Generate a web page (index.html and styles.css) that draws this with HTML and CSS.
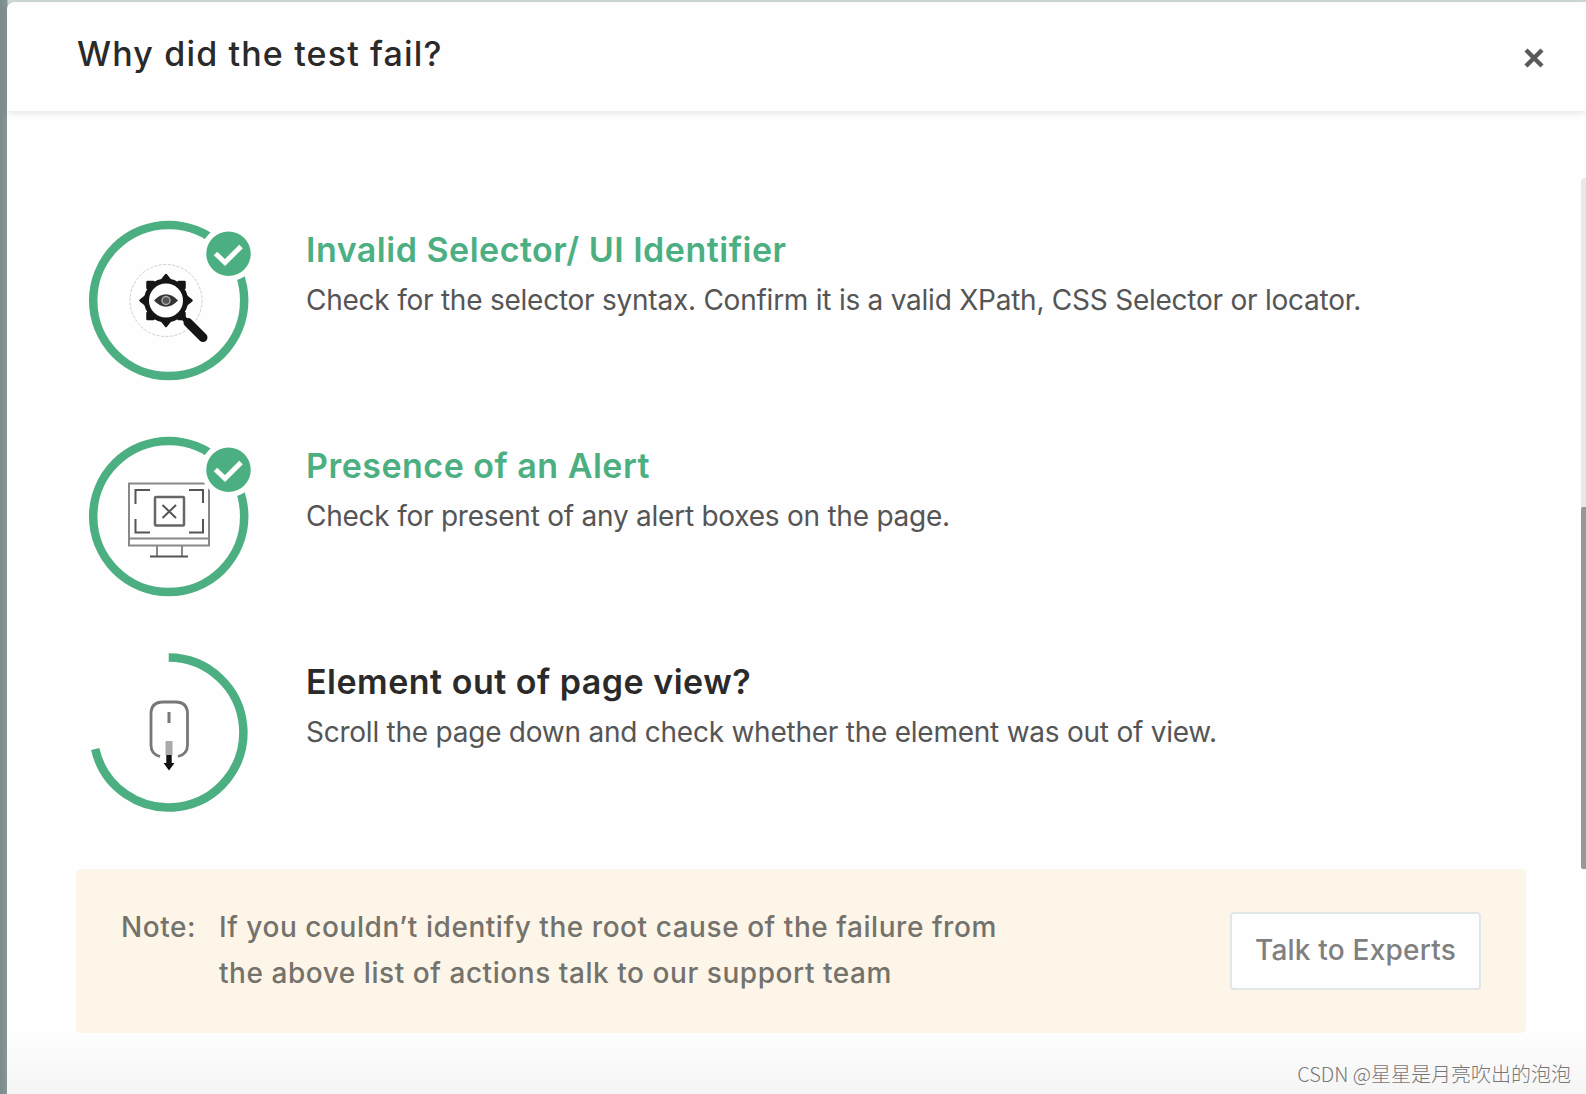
FILE: index.html
```html
<!DOCTYPE html>
<html lang="en">
<head>
  <meta charset="UTF-8">
  <meta name="viewport" content="width=device-width, initial-scale=1.0">
  <title>Why did the test fail?</title>
  <link rel="stylesheet" href="styles.css">
</head>
<body>

  <div class="modal">
    <div class="modal-header">
      <h2>Why did the test fail?</h2>
      <button class="close" aria-label="Close">
        <svg width="20" height="20" viewBox="0 0 20 20"><path d="M2 2L18 18M18 2L2 18"/></svg>
      </button>
    </div>

    <div class="modal-body">
      <ul class="checks">
        <li class="check done">
          <svg class="check-icon" viewBox="0 0 180 180">
            <circle class="ring" cx="88.7" cy="90.5" r="75.5"/>
            <circle class="orbit" cx="86" cy="90.5" r="36"/>
            <g class="gear">
              <circle cx="86" cy="90.5" r="19.5"/>
              <path class="teeth" d="M86 65l4 5h-8zM86 116l4-5h-8zM60.5 90.5l5-4v8zM111.5 90.5l-5-4v8zM67.500 72h6l-6 6zM104.500 72h-6l6 6zM67.500 109h6l-6-6zM104.500 109h-6l6-6z"/>
              <path class="neck" d="M102 106.500L107 111.500"/>
              <path class="handle" d="M108 112.500L123 127.500"/>
            </g>
            <path class="eye" d="M74 90.5Q86 78 98 90.5Q86 103 74 90.5Z"/>
            <circle class="iris" cx="86" cy="90.5" r="4"/>
            <circle class="badge" cx="148.5" cy="43.7" r="25"/>
            <path class="tick" d="M135.500 43.500L145 52.500L161 36.500"/>
          </svg>
          <div class="check-text">
            <h3>Invalid Selector/ UI Identifier</h3>
            <p>Check for the selector syntax. Confirm it is a valid XPath, CSS Selector or locator.</p>
          </div>
        </li>

        <li class="check done">
          <svg class="check-icon" viewBox="0 0 180 180">
            <circle class="ring" cx="88.7" cy="90.5" r="75.5"/>
            <g class="monitor">
              <rect x="49" y="57.5" width="80" height="62"/>
              <path d="M49 112.500H129"/>
              <path d="M77 120V130M102 120V130"/>
              <path class="dark" d="M70 130.500H108"/>
              <path class="dark" d="M70 64H55.500V78M109 64H123V77M55.500 93V106.500H70M123 93V106.500H109"/>
              <rect class="box" x="75" y="71" width="29" height="28.5" rx="1"/>
              <path class="dark" d="M82.500 79L96 92M96 79L82.500 92"/>
            </g>
            <circle class="badge" cx="148.5" cy="43.7" r="25"/>
            <path class="tick" d="M135.500 43.500L145 52.500L161 36.500"/>
          </svg>
          <div class="check-text">
            <h3>Presence of an Alert</h3>
            <p>Check for present of any alert boxes on the page.</p>
          </div>
        </li>

        <li class="check">
          <svg class="check-icon" viewBox="0 0 180 180">
            <path class="ring" d="M88.700 15.500A75 75 0 1 1 15.200 107"/>
            <path class="mouse" d="M80 114.500C74 113 71 109 71 103V72Q71 60 83 60H95.500Q107.500 60 107.500 72V103C107.500 109 104 113 98 114.500"/>
            <path class="wheel" d="M89 70V81"/>
            <path class="trail" d="M89 99V113"/>
            <path class="arrow" d="M86.300 113H91.700V121H94.500L89 128.500L83.500 121H86.300Z"/>
          </svg>
          <div class="check-text">
            <h3>Element out of page view?</h3>
            <p>Scroll the page down and check whether the element was out of view.</p>
          </div>
        </li>
      </ul>

      <div class="note">
        <span class="note-label">Note:</span>
        <p>If you couldn’t identify the root cause of the failure from<br>the above list of actions talk to our support team</p>
        <button class="btn">Talk to Experts</button>
      </div>
    </div>

    <div class="scrollbar"><div class="thumb"></div></div>
    <div class="watermark">CSDN @星星是月亮吹出的泡泡</div>
  </div>

</body>
</html>
```
FILE: styles.css
```css
* {
  box-sizing: border-box;
}

body {
  margin: 0;
  padding: 2px 0 0 7px;
  height: 100vh;
  overflow: hidden;
  font-family: Inter, "Liberation Sans", sans-serif;
  background: linear-gradient(90deg, #7b8b8c 0, #879697 7px, #cfd8d8 8px);
}

h2, h3, p, ul {
  margin: 0;
  padding: 0;
}

.modal {
  position: relative;
  height: 1092px;
  background: linear-gradient(#fefefe 1030px, #f5f5f5);
  border-top-left-radius: 8px;
}

.modal-header {
  display: flex;
  justify-content: space-between;
  height: 109px;
  padding: 30px 42px 0 70px;
  background: #fefefe;
  border-top-left-radius: 8px;
  box-shadow: 0 2px 7px rgba(0,0,0,0.1);
}

.modal-header h2 {
  font-size: 34px;
  font-weight: 500;
  line-height: 44px;
  letter-spacing: 1.15px;
  color: #2a2a2a;
}

.close {
  width: 20px;
  height: 20px;
  margin-top: 16px;
  padding: 0;
  border: none;
  background: none;
  cursor: pointer;
}

.close svg {
  display: block;
  stroke: #5a5a5a;
  stroke-width: 4.5;
}

.modal-body {
  padding: 99px 60px 0 69px;
}

.checks {
  list-style: none;
}

.check {
  display: flex;
  gap: 46px;
  height: 216px;
  padding-left: 4px;
}

.check-icon {
  flex: none;
  width: 180px;
  height: 180px;
  fill: none;
}

.ring {
  stroke: #4caf82;
  stroke-width: 8.5;
}

.badge {
  fill: #4caf82;
  stroke: #fefefe;
  stroke-width: 5.5;
}

.tick {
  stroke: #fff;
  stroke-width: 5;
}

.orbit {
  stroke: #ccc;
  stroke-width: 1;
  stroke-dasharray: 3 1.5;
}

.gear {
  stroke: #151515;
  stroke-width: 5;
}

.teeth {
  fill: #151515;
  stroke-width: 2.5;
  stroke-linejoin: round;
}

.handle {
  stroke-width: 9;
  stroke-linecap: round;
}

.eye {
  fill: #333;
}

.iris {
  fill: #555;
  stroke: #aaa;
  stroke-width: 1.5;
}

.monitor {
  stroke: #888;
  stroke-width: 2;
}

.monitor .dark {
  stroke: #555;
}

.monitor .box {
  stroke: #666;
  stroke-width: 2.5;
}

.mouse {
  stroke: #777;
  stroke-width: 2.8;
}

.wheel {
  stroke: #777;
  stroke-width: 3;
}

.trail {
  stroke: #aaa;
  stroke-width: 7;
}

.arrow {
  fill: #111;
}

.check-text {
  padding-top: 18px;
  white-space: nowrap;
}

.check-text h3 {
  font-size: 34px;
  font-weight: 600;
  line-height: 44px;
  letter-spacing: 0.5px;
  color: #2a2a2a;
}

.check.done h3 {
  color: #4caf82;
}

.check-text p {
  margin-top: 10px;
  font-size: 28px;
  line-height: 36px;
  letter-spacing: -0.24px;
  color: #555;
}

.note {
  display: flex;
  width: 1450px;
  height: 164px;
  margin-top: 11px;
  padding: 35px 45px 0;
  border-radius: 5px;
  background: #fdf6e8;
  font-size: 28px;
  font-weight: 500;
  line-height: 46px;
  letter-spacing: 0.55px;
  color: #74726c;
  white-space: nowrap;
}

.note-label {
  width: 98px;
}

.btn {
  width: 251px;
  height: 78px;
  margin: 8px 0 0 auto;
  padding: 0 0 2px;
  border: 2px solid #e1e6e6;
  border-radius: 4px;
  background: #fefefe;
  font-family: inherit;
  font-size: 28px;
  font-weight: 500;
  letter-spacing: 0.2px;
  color: #808080;
  cursor: pointer;
}

.scrollbar {
  position: absolute;
  top: 176px;
  right: 0;
  width: 5px;
  height: 691px;
  padding-top: 329px;
  background: #e8e8e8;
  border-radius: 4px 0 0 4px;
}

.thumb {
  height: 362px;
  background: #969798;
  border-radius: 2px 0 0 2px;
}

.watermark {
  position: absolute;
  right: 15px;
  bottom: 6px;
  font-family: "Noto Sans CJK SC", sans-serif;
  font-size: 20px;
  font-weight: 300;
  line-height: 28px;
  color: #777;
}
```
